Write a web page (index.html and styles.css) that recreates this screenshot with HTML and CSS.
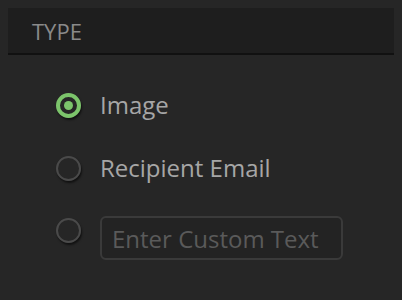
FILE: index.html
```html
<!DOCTYPE html>
<html>
	<head>
		<title>Type</title>
		<meta charset="UTF-8">
		<link rel="stylesheet" href="styles.css">
	</head>
	<body>
		<div class="section-header">TYPE</div>

		<div class="options">
			<label class="option">
				<span class="radio checked"></span>
				<span class="option-label">Image</span>
			</label>
			<label class="option">
				<span class="radio"></span>
				<span class="option-label">Recipient Email</span>
			</label>
			<label class="option option-custom">
				<span class="radio"></span>
				<input class="custom-text" type="text" placeholder="Enter Custom Text" />
			</label>
		</div>
	</body>
</html>
```

FILE: styles.css
```css
body {
	margin: 8px;
	background: #262626;
	font-family: "Open Sans", sans-serif;
}

.section-header {
	height: 45px;
	padding-left: 24px;
	display: flex;
	align-items: center;
	background: #1e1e1e;
	border-bottom: 2px solid #111111;
	color: #8a8a8a;
	font-size: 22px;
}

.options {
	display: flex;
	flex-direction: column;
	gap: 29px;
	padding: 33px 0 0 48px;
}

.option {
	display: flex;
	align-items: center;
	gap: 19px;
	height: 34px;
}

.option-custom {
	align-items: flex-start;
	height: 44px;
	margin-top: 2px;
}

.option-custom .radio {
	margin-top: 2px;
}

.radio {
	box-sizing: border-box;
	width: 25px;
	height: 25px;
	border-radius: 50%;
	border: 2px solid #4a4a4a;
	box-shadow: 1px 2px 2px rgba(0,0,0,0.55);
	display: flex;
	align-items: center;
	justify-content: center;
	flex-shrink: 0;
}

.radio.checked {
	border: 4px solid #7cc46b;
}

.radio.checked::after {
	content: "";
	width: 9px;
	height: 9px;
	border-radius: 50%;
	background: #7cc46b;
}

.option-label {
	color: #a6a6a6;
	font-size: 24px;
	line-height: 34px;
}

.custom-text {
	box-sizing: border-box;
	width: 243px;
	height: 44px;
	padding: 0 10px;
	background: #232323;
	border: 2px solid #3a3a3a;
	border-radius: 6px;
	font-family: "Open Sans", sans-serif;
	font-size: 24px;
	color: #a6a6a6;
}

.custom-text::placeholder {
	color: #5a5a5a;
}
```
